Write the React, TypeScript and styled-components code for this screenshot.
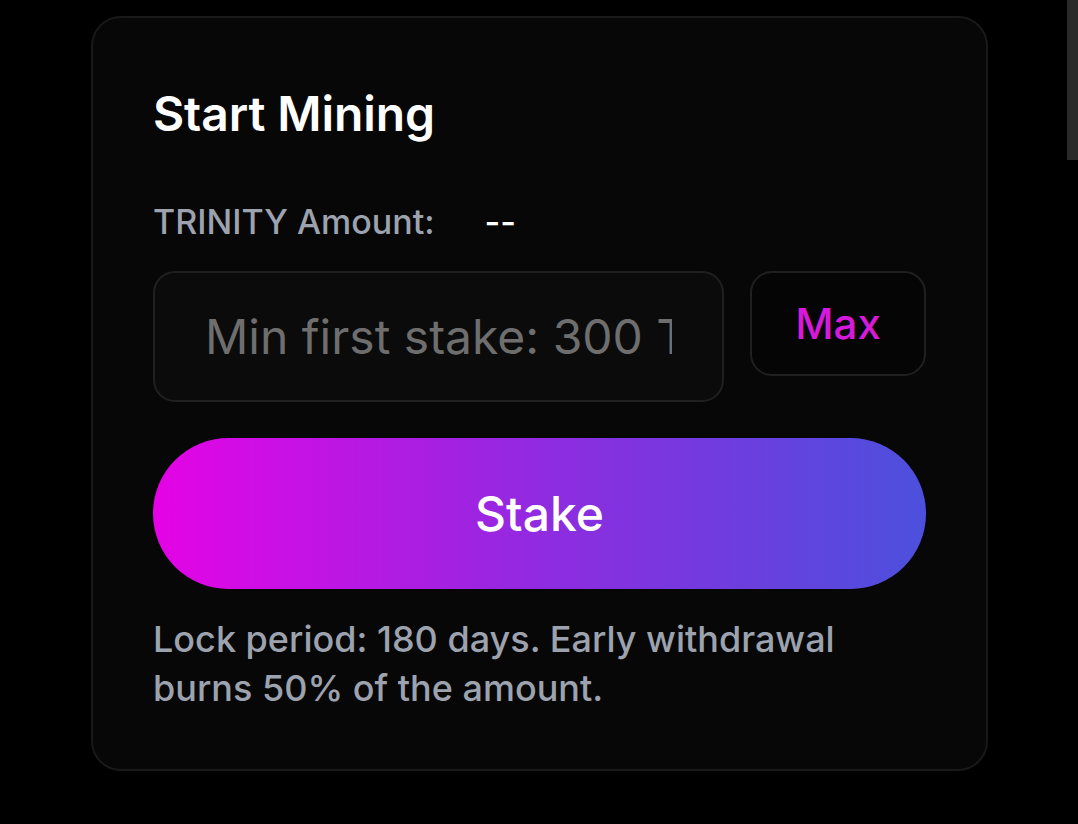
import styled, { createGlobalStyle } from 'styled-components'

const GlobalStyle = createGlobalStyle`
  html, body {
    margin: 0;
    padding: 0;
    background: #000;
    height: 100%;
    overflow: hidden;
  }
  body {
    font-family: Inter, 'Noto Sans', sans-serif;
    -webkit-font-smoothing: antialiased;
  }
`

const Page = styled.div`
  width: 1078px;
  height: 824px;
  box-sizing: border-box;
  padding: 16px 0 0 91px;
  background: #000;
`

const Card = styled.section`
  width: 897px;
  height: 755px;
  box-sizing: border-box;
  padding: 67px 60px 0 60px;
  background: #070707;
  border: 2px solid #191919;
  border-radius: 30px;
  display: flex;
  flex-direction: column;
`

const Title = styled.h2`
  margin: 0;
  color: #fff;
  font-size: 48px;
  font-weight: 600;
  line-height: 1.2;
  letter-spacing: -0.1px;
`

const AmountRow = styled.div`
  margin-top: 59px;
  display: flex;
  align-items: baseline;
  gap: 50px;
  font-size: 34px;
  line-height: 1.2;
`

const Label = styled.span`
  color: #9ca3af;
  font-weight: 500;
`

const Value = styled.span`
  color: #fff;
  font-weight: 500;
`

const InputRow = styled.div`
  margin-top: 29px;
  display: flex;
  align-items: flex-start;
  gap: 26px;
`

const AmountInput = styled.input`
  width: 571px;
  height: 131px;
  box-sizing: border-box;
  padding: 0 50px 0 50px;
  background: #0b0b0b;
  border: 2px solid #202020;
  border-radius: 22px;
  color: #fff;
  font-family: inherit;
  font-size: 48px;
  outline: none;

  &::placeholder {
    color: #6e6e6e;
  }
`

const MaxButton = styled.button`
  width: 176px;
  height: 105px;
  box-sizing: border-box;
  background: #050505;
  border: 2px solid #202020;
  border-radius: 22px;
  color: #d619da;
  font-family: inherit;
  font-size: 42px;
  font-weight: 500;
  cursor: pointer;
`

const StakeButton = styled.button`
  margin-top: 36px;
  width: 773px;
  height: 151px;
  border: 0;
  border-radius: 76px;
  background: linear-gradient(90deg, #e503e6 0%, #8d2ce0 52%, #4c50dd 100%);
  color: #fff;
  font-family: inherit;
  font-size: 48px;
  font-weight: 500;
  cursor: pointer;
`

const Note = styled.p`
  margin: 26px 0 0;
  color: #9ca3af;
  font-size: 36px;
  font-weight: 500;
  line-height: 49px;
  max-width: 720px;
`

const ScrollThumb = styled.div`
  position: fixed;
  top: 0;
  right: 0;
  width: 11px;
  height: 160px;
  background: #2a2a2a;
`

export default function App() {
  return (
    <>
      <GlobalStyle />
      <Page>
        <Card>
          <Title>Start Mining</Title>
          <AmountRow>
            <Label>TRINITY Amount:</Label>
            <Value>--</Value>
          </AmountRow>
          <InputRow>
            <AmountInput type="text" placeholder="Min first stake: 300 TRINITY" />
            <MaxButton>Max</MaxButton>
          </InputRow>
          <StakeButton>Stake</StakeButton>
          <Note>Lock period: 180 days. Early withdrawal burns 50% of the amount.</Note>
        </Card>
      </Page>
      <ScrollThumb />
    </>
  )
}
